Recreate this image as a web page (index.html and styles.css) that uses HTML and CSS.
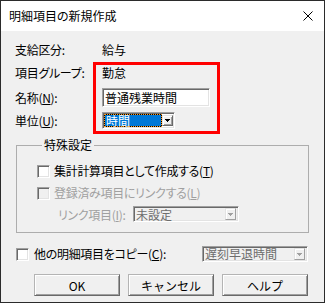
FILE: index.html
```html
<!DOCTYPE html>
<html lang="ja">
<head>
    <meta charset="UTF-8">
    <title>明細項目の新規作成</title>
    <link rel="stylesheet" href="styles.css">
</head>
<body>
    <div class="window">
        <div class="titlebar">
            <span class="title">明細項目の新規作成</span>
            <svg class="close" width="10" height="10" viewBox="0 0 10 10">
                <path d="M0.5 0.5 L9.5 9.5 M9.5 0.5 L0.5 9.5" stroke="#000" stroke-width="1"/>
            </svg>
        </div>

        <div class="content">
            <div class="row r1"><span class="label">支給区分:</span><span>給与</span></div>
            <div class="row r2"><span class="label">項目グループ:</span><span>勤怠</span></div>
            <div class="row r3"><span class="label">名称(<u>N</u>):</span><div class="textbox">普通残業時間</div></div>
            <div class="row r4">
                <span class="label">単位(<u>U</u>):</span>
                <div class="combo unit">
                    <span class="combo-value selected">時間</span>
                    <span class="combo-btn"><svg width="5" height="3" viewBox="0 0 5 3"><path d="M0 0h5v1h-1v1h-1v1h-1v-1h-1v-1h-1z" fill="#000"/></svg></span>
                </div>
            </div>

            <!-- annotation box -->
            <div class="highlight"></div>

            <fieldset class="group">
                <legend>特殊設定</legend>
                <div class="check-row c1">
                    <span class="checkbox"></span>
                    <span>集計計算項目として作成する(<u>T</u>)</span>
                </div>
                <div class="check-row c2 disabled">
                    <span class="checkbox"></span>
                    <span>登録済み項目にリンクする(<u>L</u>)</span>
                </div>
                <div class="link-row disabled">
                    <span class="link-label">リンク項目(<u>I</u>):</span>
                    <div class="combo off link">
                        <span class="combo-value">未設定</span>
                        <span class="combo-btn"><svg width="5" height="3" viewBox="0 0 5 3"><path d="M0 0h5v1h-1v1h-1v1h-1v-1h-1v-1h-1z" fill="#a0a0a0"/></svg></span>
                    </div>
                </div>
            </fieldset>

            <div class="copy-row">
                <span class="checkbox"></span>
                <span class="copy-label">他の明細項目をコピー(<u>C</u>):</span>
                <div class="combo off copy">
                    <span class="combo-value">遅刻早退時間</span>
                    <span class="combo-btn"><svg width="5" height="3" viewBox="0 0 5 3"><path d="M0 0h5v1h-1v1h-1v1h-1v-1h-1v-1h-1z" fill="#a0a0a0"/></svg></span>
                </div>
            </div>

            <div class="buttons">
                <button class="btn">OK</button>
                <button class="btn">キャンセル</button>
                <button class="btn">ヘルプ</button>
            </div>
        </div>
    </div>
</body>
</html>
```

FILE: styles.css
```css
body {
    margin: 0;
    font-family: "Noto Sans CJK JP", "Noto Sans", sans-serif;
    font-size: 12px;
    font-feature-settings: "palt";
    color: #000;
}
u {
    text-decoration-thickness: 1px;
    text-underline-offset: 1px;
}
.window {
    width: 325px;
    height: 303px;
    box-sizing: border-box;
    border: 1px solid #2b2b2b;
    background: #f0f0f0;
    display: flex;
    flex-direction: column;
}
.titlebar {
    height: 30px;
    flex: none;
    background: #fff;
    display: flex;
    align-items: center;
    justify-content: space-between;
    padding: 0 11px 0 8px;
}
.title {
    font-size: 12px;
    line-height: 16px;
}
.content {
    position: relative;
    padding: 0 15px 0 14px;
}
.row {
    display: flex;
    align-items: center;
    line-height: 16px;
}
.label {
    width: 87px;
    flex: none;
    letter-spacing: -0.3px;
}
.r1 { height: 18px; margin-top: 10px; }
.r2 { height: 18px; margin-top: 5px; }
.r3 { height: 19px; margin-top: 6px; }
.r4 { height: 17px; margin-top: 5px; }

.textbox {
    width: 108px;
    height: 19px;
    box-sizing: border-box;
    background: #fff;
    border: 1px solid;
    border-color: #a0a0a0 #fff #fff #a0a0a0;
    box-shadow: inset 1px 1px #696969, inset -1px -1px #e3e3e3;
    padding: 1px 0 0 2px;
    line-height: 16px;
}

.combo {
    height: 17px;
    box-sizing: border-box;
    display: flex;
    align-items: stretch;
    background: #fff;
    border: 1px solid;
    border-color: #a0a0a0 #fff #fff #a0a0a0;
    box-shadow: inset 1px 1px #696969, inset -1px -1px #e3e3e3;
    padding: 2px;
}
.combo-value {
    flex: 1;
    display: flex;
    align-items: center;
    padding-left: 1px;
    white-space: nowrap;
}
.combo-btn {
    width: 11px;
    flex: none;
    box-sizing: border-box;
    display: flex;
    align-items: center;
    justify-content: center;
    background: #f0f0f0;
    border: 1px solid;
    border-color: #e3e3e3 #696969 #696969 #e3e3e3;
    box-shadow: inset 1px 1px #fff, inset -1px -1px #a0a0a0;
    margin-left: 1px;
}
.unit {
    width: 73px;
    padding: 1px;
}
.unit .combo-btn {
    margin: 1px 0;
}
.selected {
    background: #0078d7;
    color: #fff;
    border: 1px solid #000;
    outline: 1px dotted #ff9a1a;
    outline-offset: -1px;
    padding-left: 1px;
}

.combo.off {
    background: #f0f0f0;
    height: 16px;
    padding: 1px 2px 1px 1px;
}
.combo.off .combo-value {
    color: #6d6d6d;
}
.combo.off .combo-btn {
    border-color: #e3e3e3 #a0a0a0 #a0a0a0 #e3e3e3;
    box-shadow: inset 1px 1px #fff;
}
.link { width: 106px; }
.copy { width: 106px; margin-left: auto; margin-right: 1px; }

.highlight {
    position: absolute;
    left: 92px;
    top: 31px;
    width: 127px;
    height: 72px;
    box-sizing: border-box;
    border: 3px solid #f00;
}

.group {
    margin: 8px 0 0 1px;
    padding: 0 0 10px 20px;
    border: 1px solid #adadad;
    min-width: 0;
}
.group legend {
    margin-left: 5px;
    padding: 0 2px;
    line-height: 16px;
}
.check-row {
    display: flex;
    align-items: center;
    gap: 4px;
    height: 16px;
    line-height: 16px;
    letter-spacing: -0.3px;
}
.c1 { margin-top: 10px; }
.c2 { margin-top: 6px; }
.checkbox {
    width: 13px;
    height: 13px;
    flex: none;
    box-sizing: border-box;
    background: #fff;
    border: 1px solid;
    border-color: #a0a0a0 #fff #fff #a0a0a0;
    box-shadow: inset 1px 1px #696969, inset -1px -1px #e3e3e3;
}
.disabled {
    color: #a0a0a0;
}
.disabled .checkbox {
    background: #f0f0f0;
}
.link-row {
    display: flex;
    align-items: center;
    margin-top: 5px;
    height: 16px;
}
.link-label {
    width: 75px;
    margin-left: 21px;
    letter-spacing: -0.3px;
}

.copy-row {
    display: flex;
    align-items: center;
    gap: 5px;
    height: 16px;
    margin-top: 13px;
    line-height: 16px;
}
.copy-label {
    letter-spacing: -0.3px;
}
.copy-row .checkbox {
    margin-left: 1px;
}

.buttons {
    display: flex;
    justify-content: flex-end;
    gap: 8px;
    margin: 12px 1px 0 0;
}
.btn {
    width: 86px;
    height: 22px;
    box-sizing: border-box;
    font-family: inherit;
    font-size: 12px;
    color: #000;
    background: #f0f0f0;
    border: 1px solid;
    border-color: #b4b4b4 #696969 #696969 #b4b4b4;
    box-shadow: inset 1px 1px #fff, inset -1px -1px #a0a0a0;
    padding: 0;
}
```
